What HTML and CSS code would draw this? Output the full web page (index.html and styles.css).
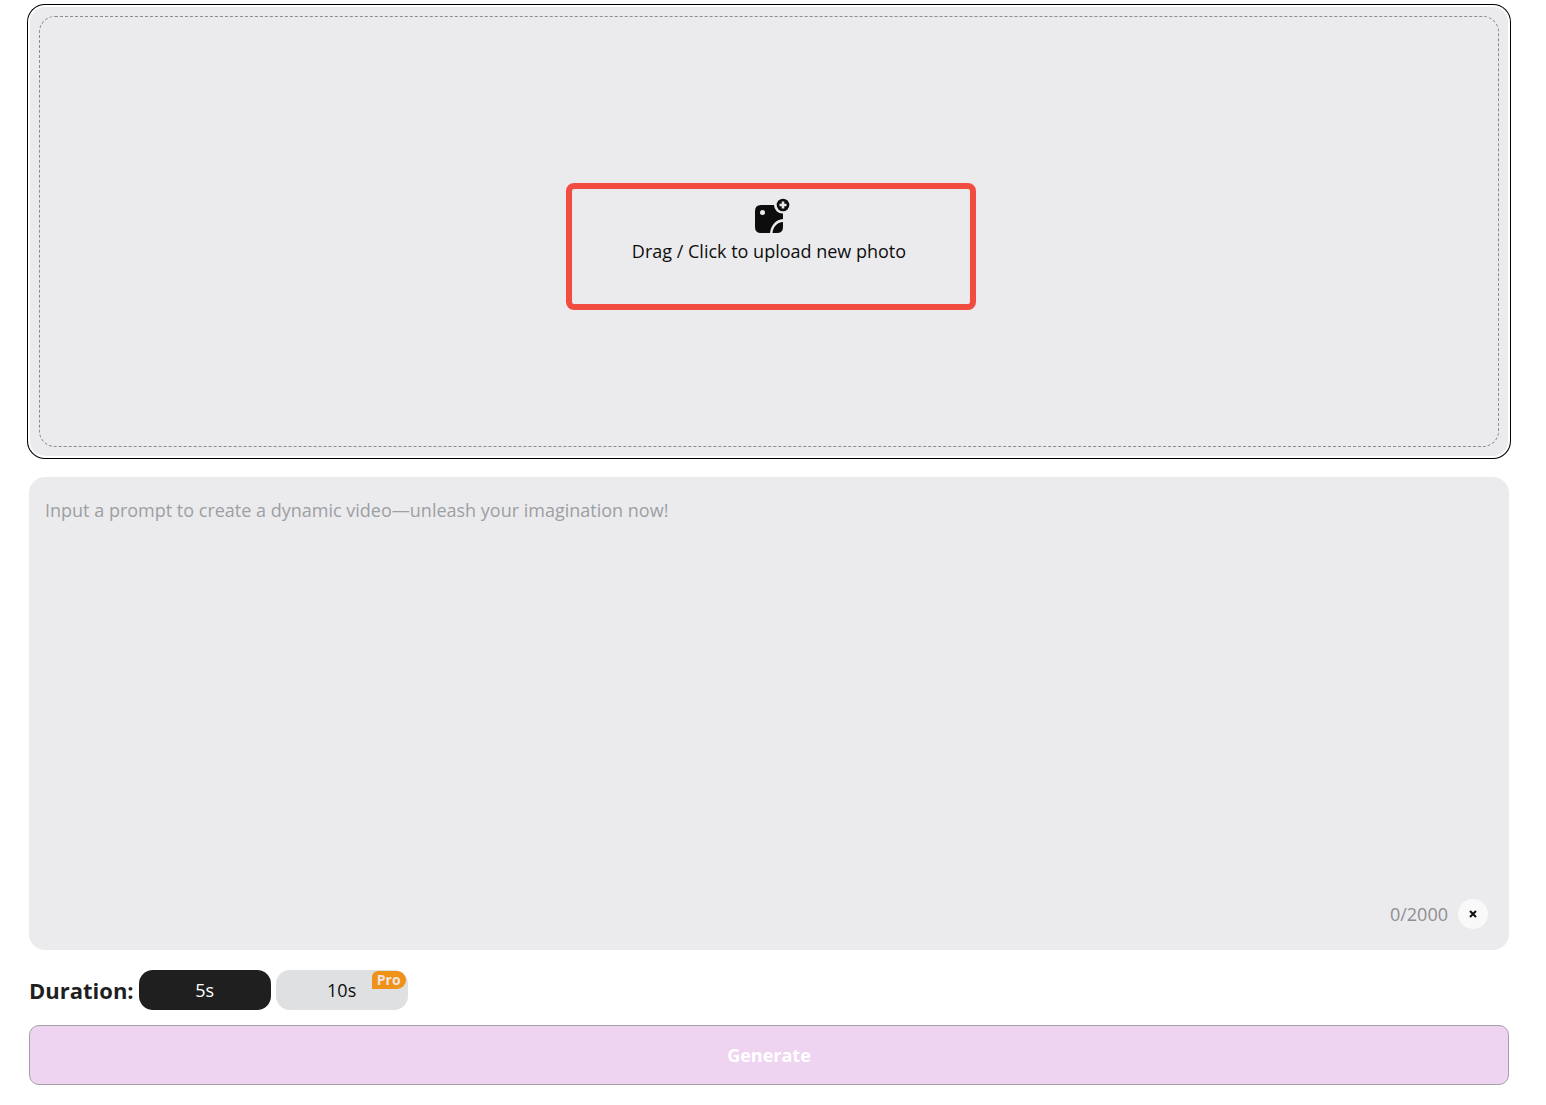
FILE: index.html
```html
<!DOCTYPE html>
<html lang="en">
<head>
  <meta charset="UTF-8">
  <meta name="viewport" content="width=device-width, initial-scale=1.0">
  <title>Image to Video</title>
  <link rel="stylesheet" href="styles.css">
</head>
<body>
  <form class="container">
    <button type="button" class="upload">
      <span class="drop-area">
        <svg class="upload-icon" viewBox="0 0 36 36" width="36" height="36" aria-hidden="true">
          <path fill="#0d0d0d" d="M7 7H20A8.500 8.500 0 0 0 29 15.500V21C22 21.500 17 27 16 35H7Q1 35 1 29V13Q1 7 7 7Z"/>
          <path fill="#0d0d0d" d="M29 24V29Q29 35 23 35H18.500C19 29 23 24.500 29 24Z"/>
          <circle cx="8.500" cy="14.500" r="2.500" fill="#ebebed"/>
          <circle cx="29" cy="7" r="6.300" fill="#0d0d0d"/>
          <path stroke="#ebebed" stroke-width="2.600" d="M29 3.500V10.500M25.500 7H32.500"/>
        </svg>
        <span class="upload-text">Drag / Click to upload new photo</span>
        <span class="highlight"></span>
      </span>
    </button>

    <div class="prompt">
      <textarea class="prompt-input" maxlength="2000" aria-label="Prompt" placeholder="Input a prompt to create a dynamic video—unleash your imagination now!"></textarea>
      <div class="prompt-footer">
        <span class="count">0/2000</span>
        <button type="button" class="clear" aria-label="Clear prompt">
          <svg viewBox="0 0 8 8" width="8" height="8" aria-hidden="true">
            <path stroke="#111" stroke-width="2" d="M1 1L7 7M7 1L1 7"/>
          </svg>
        </button>
      </div>
    </div>

    <div class="duration">
      <span class="duration-label">Duration:</span>
      <button type="button" class="option active">5s</button>
      <button type="button" class="option">10s<span class="badge">Pro</span></button>
    </div>

    <button type="submit" class="generate" disabled>Generate</button>
  </form>
</body>
</html>
```
FILE: styles.css
```css
* {
  box-sizing: border-box;
}

body {
  margin: 0;
  background-color: #fff;
  color: #0d0d0d;
  font-family: "Segoe UI", "Open Sans", "Noto Sans", sans-serif;
  font-size: 18px;
}

button, textarea {
  font: inherit;
  color: inherit;
}

button {
  padding: 0;
  border: none;
  cursor: pointer;
}

.container {
  display: flex;
  flex-direction: column;
  min-height: 100vh;
  padding: 6px 37px 20px 29px;
}

.upload {
  display: flex;
  min-height: 451px;
  padding: 10px;
  background: #ebebed;
  border-radius: 16px;
  box-shadow: inset 0 0 0 1px #fff, 0 0 0 1px #fff, 0 0 0 2px #000;
}

.drop-area {
  position: relative;
  flex: 1;
  display: flex;
  flex-direction: column;
  align-items: center;
  justify-content: center;
  gap: 2px;
  border: 1px dashed #8c8c8c;
  border-radius: 16px;
}

.upload-icon {
  margin-left: 6px;
}

.upload-text {
  line-height: 30px;
}

/* frame around the upload hint */
.highlight {
  position: absolute;
  top: 166px;
  left: 50%;
  width: 410px;
  height: 127px;
  margin-left: -203px;
  border: 6px solid #f24b3f;
  border-radius: 8px;
}

.prompt {
  display: flex;
  flex-direction: column;
  flex: 1;
  margin-top: 20px;
  background: #ebebed;
  border-radius: 16px;
}

.prompt-input {
  flex: 1;
  width: 100%;
  padding: 20px 16px;
  border: none;
  outline: none;
  background: transparent;
  line-height: 26px;
  resize: none;
}

.prompt-input::placeholder {
  color: #9c9fa4;
}

.prompt-footer {
  display: flex;
  align-items: center;
  justify-content: flex-end;
  gap: 10px;
  padding: 0 21px 21px;
}

.count {
  color: #8e8e92;
}

.clear {
  display: flex;
  align-items: center;
  justify-content: center;
  width: 30px;
  height: 30px;
  border-radius: 50%;
  background: #f9f9fa;
}

.duration {
  display: flex;
  align-items: center;
  gap: 5px;
  margin-top: 20px;
}

.duration-label {
  color: #1f1f1f;
  font-size: 22px;
  font-weight: 700;
}

.option {
  position: relative;
  width: 132px;
  height: 40px;
  border-radius: 14px;
  background: #dfe0e2;
}

.option.active {
  background: #1f1f1f;
  color: #fff;
}

.badge {
  position: absolute;
  top: 1px;
  right: 2px;
  padding: 0 5px;
  border-radius: 6px 9px 9px 0;
  background: #ef9219;
  color: #f3e3e0;
  font-size: 14px;
  font-weight: 700;
  line-height: 18px;
}

.generate {
  height: 60px;
  margin-top: 15px;
  border: 1px solid #a3a0a8;
  border-radius: 10px;
  background: #efd4f2;
  color: #fff;
  font-weight: 700;
}
```
